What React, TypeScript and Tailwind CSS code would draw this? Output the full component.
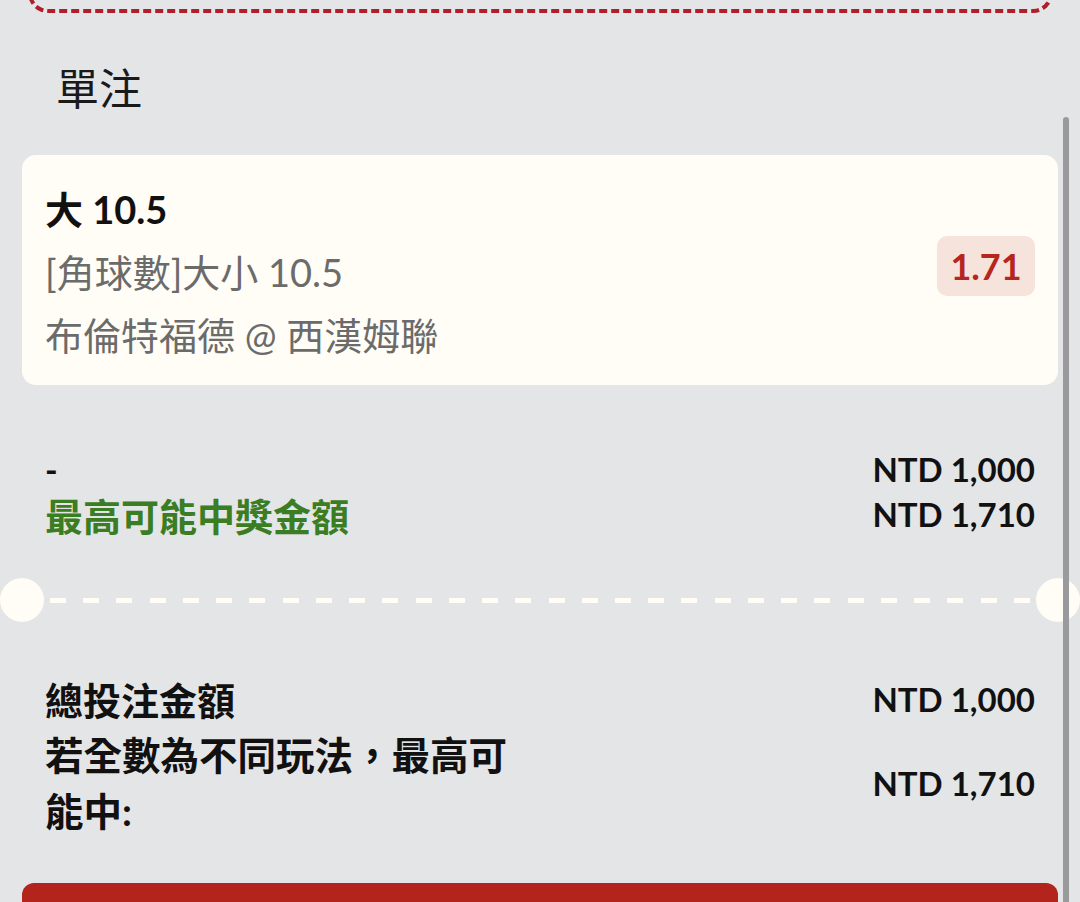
import React from 'react'

const font = "font-['Lato','Noto_Sans_CJK_TC',sans-serif]"

function Separator() {
  return (
    <div className="flex items-center w-full">
      <div className="w-[44px] h-[44px] rounded-full bg-[#fffdf5] shrink-0" />
      <div className="flex-1 flex justify-between mx-[6px]">
        {Array.from({ length: 30 }).map((_, i) => (
          <span key={i} className="block w-[16px] h-[5px] bg-[#fffdf5]" />
        ))}
      </div>
      <div className="w-[44px] h-[44px] rounded-full bg-[#fffdf5] shrink-0" />
    </div>
  )
}

function BetCard() {
  return (
    <div className="mx-[22px] mt-[36px] h-[230px] rounded-[14px] bg-[#fffdf5] pl-[23px] pr-[23px] pt-[23px] flex items-start justify-between">
      <div className="flex flex-col">
        <div className="text-[38px] leading-[63px] font-bold text-[#111]">大 10.5</div>
        <div className="text-[38px] leading-[63px] text-[#6b6b6b]">[角球數]大小 10.5</div>
        <div className="text-[38px] leading-[63px] text-[#6b6b6b]">布倫特福德 @ 西漢姆聯</div>
      </div>
      <div className="mt-[58px] w-[98px] h-[60px] rounded-[10px] bg-[#f6e4dc] flex items-center justify-center text-[36px] font-bold text-[#b5261e]">
        1.71
      </div>
    </div>
  )
}

export default function App() {
  return (
    <div className={`relative w-full h-[902px] overflow-hidden bg-[#e4e5e7] ${font}`}>
      <div className="ml-[28px] mr-[27px] -mt-[60px] h-[73px] rounded-[20px] border-[4px] border-dashed border-[#b01e2c]" />

      <h2 className="mt-[46px] pl-[56px] text-[43px] leading-[60px] font-normal text-[#1a1a1a]">單注</h2>

      <BetCard />

      <div className="mt-[62px] px-[45px] flex flex-col">
        <div className="flex justify-between items-center h-[45px]">
          <span className="text-[34px] font-bold text-[#111]">-</span>
          <span className="text-[33px] font-bold text-[#111]">NTD 1,000</span>
        </div>
        <div className="flex justify-between items-center h-[45px]">
          <span className="text-[38px] font-bold text-[#3b7d23] mt-[4px]">最高可能中獎金額</span>
          <span className="text-[33px] font-bold text-[#111]">NTD 1,710</span>
        </div>
      </div>

      <div className="mt-[41px]">
        <Separator />
      </div>

      <div className="mt-[50px] px-[45px] flex flex-col text-[#111]">
        <div className="flex justify-between items-center h-[56px]">
          <span className="text-[38px] font-bold">總投注金額</span>
          <span className="text-[33px] font-bold">NTD 1,000</span>
        </div>
        <div className="flex justify-between items-center">
          <span className="w-[480px] text-[38.5px] leading-[55.5px] font-bold">若全數為不同玩法，最高可能中:</span>
          <span className="text-[33px] font-bold">NTD 1,710</span>
        </div>
      </div>

      <div className="mt-[44px] mx-[22px] h-[60px] rounded-t-[12px] bg-[#b3241c]" />

      <div className="absolute left-[1063px] top-[117px] w-[6px] h-[800px] rounded-full bg-[#9a9a9c]" />
    </div>
  )
}
